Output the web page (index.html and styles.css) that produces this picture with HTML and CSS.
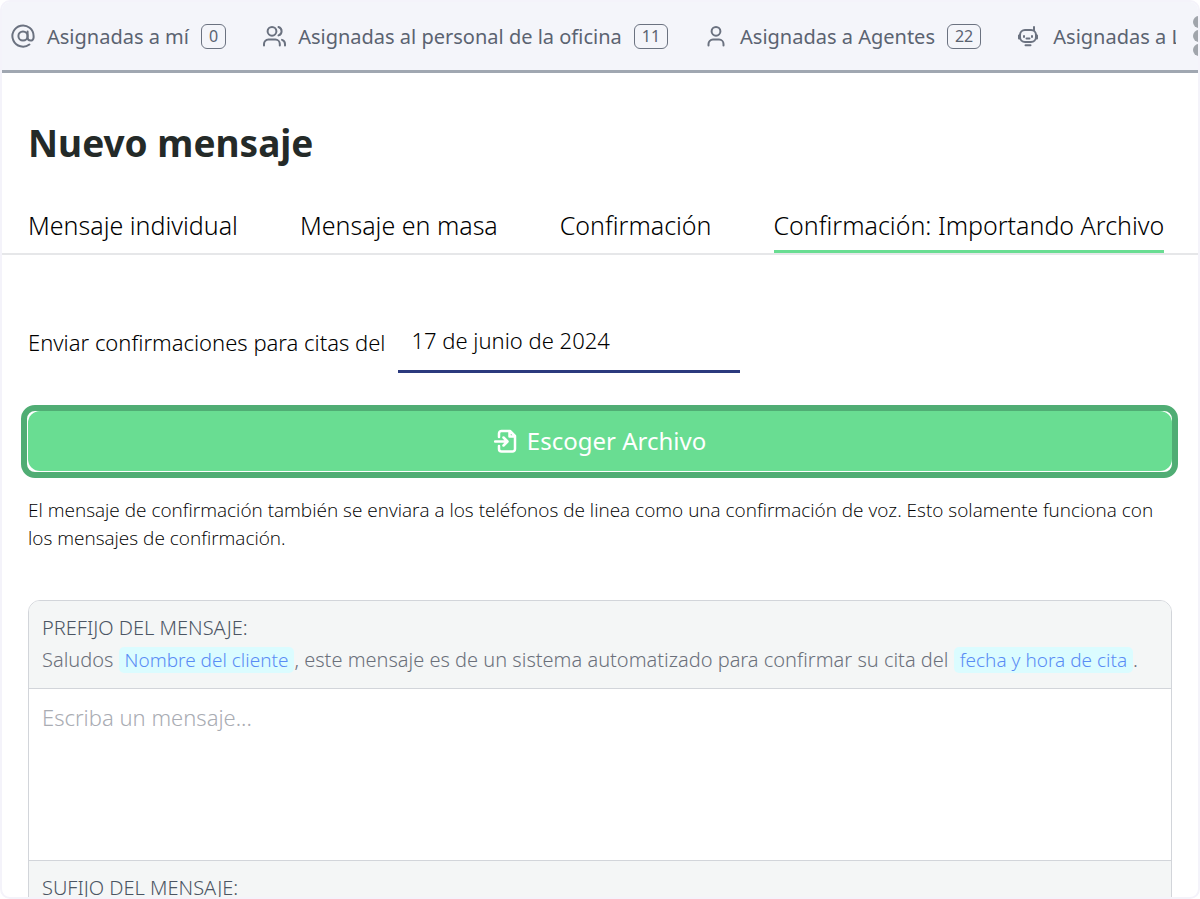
FILE: index.html
```html
<!DOCTYPE html>
<html lang="es">
<head>
    <meta charset="UTF-8">
    <meta name="viewport" content="width=device-width, initial-scale=1.0">
    <title>Nuevo mensaje</title>
    <link rel="stylesheet" href="styles.css">
</head>
<body>
<div class="frame">
    <header class="topbar">
        <nav class="inbox-list">
            <a href="#" class="inbox">
                <svg class="inbox-icon" viewBox="0 0 24 24">
                    <circle cx="12" cy="12" r="4.6"/>
                    <path d="M16.6 7.4v6.2a3 3 0 0 0 6 0V12A10.6 10.6 0 1 0 18.4 20.500"/>
                </svg>
                Asignadas a mí <span class="count">0</span>
            </a>
            <a href="#" class="inbox">
                <svg class="inbox-icon" viewBox="0 0 24 24">
                    <circle cx="10" cy="7.300" r="4.400"/>
                    <path d="M2 21.500v-1.500a4.400 4.400 0 0 1 4.400-4.400h7a4.400 4.400 0 0 1 4.400 4.400v1.500M16.500 3a4.400 4.400 0 0 1 0 8.400M20 15.900a4.400 4.400 0 0 1 3 4.100v1.500"/>
                </svg>
                Asignadas al personal de la oficina <span class="count">11</span>
            </a>
            <a href="#" class="inbox">
                <svg class="inbox-icon" viewBox="0 0 24 24">
                    <circle cx="12" cy="7.300" r="4.400"/>
                    <path d="M4.500 21.500v-1.500a4.400 4.400 0 0 1 4.400-4.400h6.200a4.400 4.400 0 0 1 4.400 4.400v1.500"/>
                </svg>
                Asignadas a Agentes <span class="count">22</span>
            </a>
            <a href="#" class="inbox">
                <svg class="inbox-icon" viewBox="0 0 24 24">
                    <path d="M17 6.500V3M8 6h6a5 5 0 0 1 5 5v2a5 5 0 0 1-5 5H8a5 5 0 0 1-5-5v-2a5 5 0 0 1 5-5zM2 11.500v3M20 11.500v3M7 12v1M15 12v1M9.500 14.500h3M8.500 21.300h5"/>
                </svg>
                Asignadas a L
            </a>
        </nav>
        <button class="more" aria-label="Más opciones">
            <svg viewBox="0 0 12 40">
                <circle cx="6" cy="6" r="6"/>
                <circle cx="6" cy="20" r="6"/>
                <circle cx="6" cy="34" r="6"/>
            </svg>
        </button>
    </header>

    <h1>Nuevo mensaje</h1>

    <nav class="tabs">
        <a href="#" class="tab">Mensaje individual</a>
        <a href="#" class="tab">Mensaje en masa</a>
        <a href="#" class="tab">Confirmación</a>
        <a href="#" class="tab active">Confirmación: Importando Archivo</a>
    </nav>

    <main>
        <div class="date-row">
            <label for="date">Enviar confirmaciones para citas del</label>
            <input type="text" id="date" value="17 de junio de 2024">
        </div>

        <div class="highlight">
            <button class="choose">
                <svg viewBox="0 0 24 24">
                    <path d="M5 8V4.500A2.500 2.500 0 0 1 7.500 2H16l5 5v13a2.500 2.500 0 0 1-2.500 2.500h-11A2.500 2.500 0 0 1 5 20v-3M15.500 2.500V7.500H20.500M1 12.500h12M9.500 8.500l4 4-4 4"/>
                </svg>
                Escoger Archivo
            </button>
        </div>

        <p class="note">El mensaje de confirmación también se enviara a los teléfonos de linea como una confirmación de voz. Esto solamente funciona con los mensajes de confirmación.</p>

        <div class="editor">
            <div class="fixed-text">
                <label for="message" class="caption">PREFIJO DEL MENSAJE:</label>
                <p>Saludos <span class="tag">Nombre del cliente</span>, este mensaje es de un sistema automatizado para confirmar su cita del <span class="tag">fecha y hora de cita</span>.</p>
            </div>
            <textarea id="message" placeholder="Escriba un mensaje..."></textarea>
            <div class="fixed-text">
                <span class="caption">SUFIJO DEL MENSAJE:</span>
            </div>
        </div>
    </main>
</div>
</body>
</html>
```
FILE: styles.css
```css
* {
    box-sizing: border-box;
}

body {
    margin: 0;
    background-color: #fff;
    font-family: "Noto Sans", "Open Sans", sans-serif;
    font-weight: 300;
    color: #000;
}

a {
    color: inherit;
    text-decoration: none;
}

.frame {
    height: 100vh;
    border: 2px solid #f4f3fa;
    border-radius: 10px;
    overflow: hidden;
}

/* top bar */
.topbar {
    display: flex;
    align-items: center;
    justify-content: space-between;
    height: 71px;
    padding-left: 9px;
    background-color: #f4f5fa;
    border-bottom: 3px solid #a0a7b1;
    overflow: hidden;
}

.inbox-list {
    display: flex;
    flex: 1;
    gap: 36px;
    min-width: 0;
    margin-right: 17px;
    overflow: hidden;
}

.inbox {
    display: flex;
    align-items: center;
    gap: 12px;
    flex-shrink: 0;
    white-space: nowrap;
    font-size: 20px;
    font-weight: 400;
    color: #5b6371;
}

.inbox-icon {
    width: 24px;
    height: 24px;
    fill: none;
    stroke: #6b7280;
    stroke-width: 2;
    stroke-linecap: round;
    stroke-linejoin: round;
}

.count {
    height: 25px;
    padding: 0 7px;
    border: 1px solid #6b7280;
    border-radius: 6px;
    font-size: 16px;
    line-height: 23px;
}

.more {
    width: 12px;
    height: 40px;
    margin-right: -7px;
    padding: 0;
    border: 0;
    background: none;
    cursor: pointer;
}

.more svg {
    display: block;
    fill: #a0a5ab;
}

/* title and tabs */
h1 {
    margin: 45px 26px 36px;
    font-size: 37px;
    line-height: 50px;
    font-weight: 700;
    color: #242a28;
}

.tabs {
    display: flex;
    gap: 62px;
    padding: 0 26px;
    border-bottom: 2px solid #e6e7e9;
}

.tab {
    padding: 4px 0 8px;
    border-bottom: 3px solid transparent;
    font-size: 25px;
    line-height: 34px;
    white-space: nowrap;
}

.tab.active {
    border-bottom-color: #69dd92;
}

main {
    padding: 58px 26px 0;
}

.date-row {
    display: flex;
    align-items: center;
    gap: 13px;
    font-size: 22px;
}

.date-row label {
    padding-bottom: 3px;
}

.date-row input {
    width: 342px;
    height: 60px;
    padding: 0 13px 4px;
    border: 0;
    border-bottom: 3px solid #2b3a7e;
    background: none;
    font: inherit;
    color: #000;
    outline: none;
}

.highlight {
    margin: 32px -6px 0 -7px;
    padding: 0 0 1px 1px;
    border: 6px solid #50ad74;
    border-radius: 14px;
}

.choose {
    display: flex;
    align-items: center;
    justify-content: center;
    gap: 9px;
    width: 100%;
    height: 60px;
    padding-bottom: 2px;
    border: 0;
    border-radius: 12px;
    background-color: #69dd92;
    color: #fff;
    font-family: inherit;
    font-size: 24px;
    font-weight: 400;
    cursor: pointer;
}

.choose svg {
    width: 24px;
    height: 24px;
    fill: none;
    stroke: #fff;
    stroke-width: 2.5;
    stroke-linecap: round;
    stroke-linejoin: round;
}

.note {
    margin: 18px 0 48px;
    font-family: "Open Sans", sans-serif;
    font-size: 19px;
    line-height: 28px;
}

/* message editor */
.editor {
    border: 1px solid #d2d5da;
    border-radius: 12px;
    overflow: hidden;
}

.fixed-text {
    padding: 11px 13px 12px;
    background-color: #f4f6f6;
    font-size: 20px;
    line-height: 32px;
    color: #6b707b;
}

.fixed-text p {
    margin: 0;
}

.caption {
    display: block;
    color: #4b5563;
}

.tag {
    padding: 0 6px;
    border-radius: 5px;
    background-color: #dbfcff;
    font-size: 19px;
    color: #5a8cf5;
}

textarea {
    display: block;
    width: 100%;
    height: 173px;
    padding: 13px;
    border: 0;
    border-top: 1px solid #d2d5da;
    border-bottom: 1px solid #d2d5da;
    font-family: inherit;
    font-size: 22px;
    font-weight: 300;
    resize: none;
    outline: none;
}

textarea::placeholder {
    color: #a9acb3;
}
```
